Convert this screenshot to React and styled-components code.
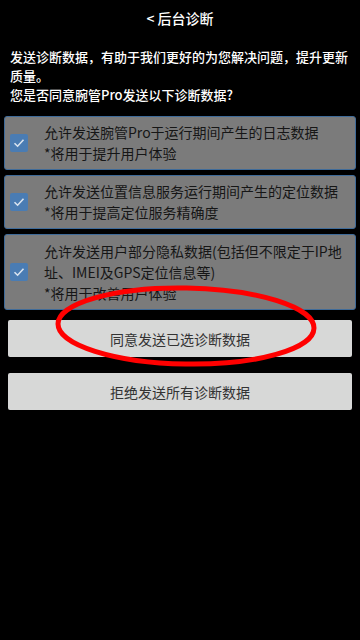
import React from "react";
import styled, { createGlobalStyle } from "styled-components";

const GlobalStyle = createGlobalStyle`
  html, body {
    margin: 0;
    padding: 0;
    background: #000;
  }
  body {
    font-family: "Noto Sans CJK SC", "Noto Sans", sans-serif;
  }
`;

const Page = styled.div`
  position: relative;
  width: 360px;
  height: 640px;
  background: #000;
  overflow: hidden;
`;

const TitleBar = styled.div`
  height: 36px;
  display: flex;
  align-items: center;
  justify-content: center;
  color: #fff;
  font-size: 14px;
  font-weight: 500;
`;

const Intro = styled.div`
  margin: 11px 8px 0 10px;
  color: #fff;
  font-size: 13px;
  line-height: 19px;
  font-weight: 500;
`;

const CardList = styled.div`
  display: flex;
  flex-direction: column;
  gap: 5px;
  margin: 12px 4px 0 4px;
`;

const Card = styled.div`
  display: flex;
  align-items: center;
  min-height: ${(p) => p.height}px;
  box-sizing: border-box;
  padding: 0 5px;
  background: #7b7b7b;
  border: 1px solid #3f6b99;
  border-radius: 3px;
`;

const Check = styled.div`
  flex: 0 0 18px;
  height: 18px;
  border-radius: 2px;
  background: #4a7cb3;
  display: flex;
  align-items: center;
  justify-content: center;
  margin-right: 16px;
`;

const CardText = styled.div`
  color: #161616;
  font-size: 14px;
  line-height: 21px;
`;

const Buttons = styled.div`
  display: flex;
  flex-direction: column;
  gap: 16px;
  margin: 10px 8px 0 8px;
`;

const Button = styled.div`
  height: 37px;
  display: flex;
  align-items: center;
  justify-content: center;
  background: #d7d8d7;
  border-radius: 2px;
  color: #333;
  font-size: 14px;
`;

const Circle = styled.svg`
  position: absolute;
  left: 50px;
  top: 280px;
  pointer-events: none;
`;

const CheckMark = () => (
  <svg width="12" height="10" viewBox="0 0 12 10">
    <path d="M1.5 5.2 L4.6 8.2 L10.5 1.8" fill="none" stroke="#d9e4f0" strokeWidth="1.6" />
  </svg>
);

const items = [
  { h: 54, lines: ["允许发送腕管Pro于运行期间产生的日志数据", "*将用于提升用户体验"] },
  { h: 54, lines: ["允许发送位置信息服务运行期间产生的定位数据", "*将用于提高定位服务精确度"] },
  {
    h: 76,
    lines: ["允许发送用户部分隐私数据(包括但不限定于IP地址、IMEI及GPS定位信息等)", "*将用于改善用户体验"],
  },
];

const App = () => {
  return (
    <Page>
      <GlobalStyle />
      <TitleBar>&lt; 后台诊断</TitleBar>
      <Intro>
        发送诊断数据，有助于我们更好的为您解决问题，提升更新质量。
        <br />
        您是否同意腕管Pro发送以下诊断数据?
      </Intro>
      <CardList>
        {items.map((item, i) => (
          <Card key={i} height={item.h}>
            <Check>
              <CheckMark />
            </Check>
            <CardText>
              {item.lines.map((l, j) => (
                <div key={j}>{l}</div>
              ))}
            </CardText>
          </Card>
        ))}
      </CardList>
      <Buttons>
        <Button>同意发送已选诊断数据</Button>
        <Button>拒绝发送所有诊断数据</Button>
      </Buttons>
      {/* 红色圈注 */}
      <Circle width="280" height="95" viewBox="0 0 280 95">
        <ellipse cx="136" cy="46" rx="128" ry="38" fill="none" stroke="#ff0000" strokeWidth="5" transform="rotate(1 136 46)" />
      </Circle>
    </Page>
  );
};

export default App;
